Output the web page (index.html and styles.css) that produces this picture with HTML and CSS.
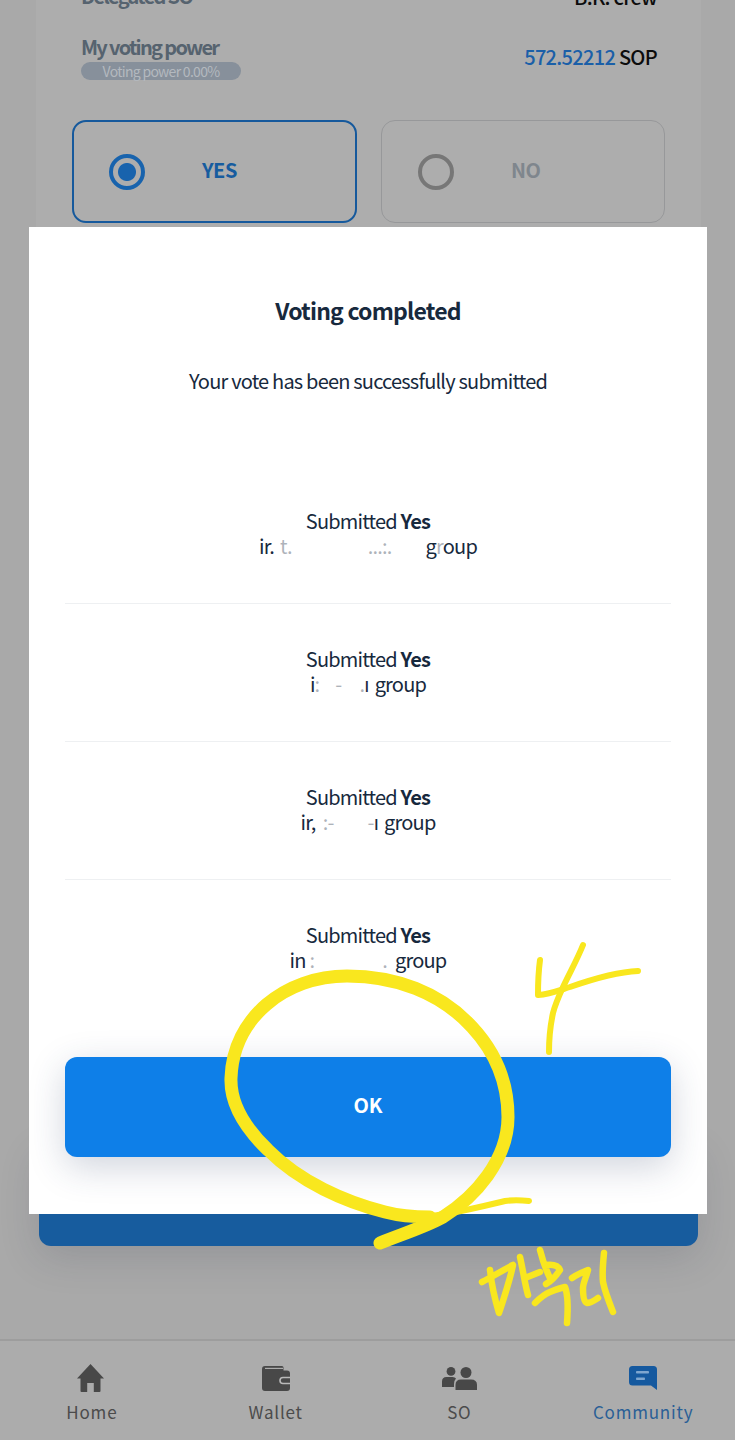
FILE: index.html
```html
<!DOCTYPE html>
<html lang="en">
<head>
<meta charset="utf-8">
<title>Voting completed</title>
<link rel="stylesheet" href="styles.css">
</head>
<body>
<div class="screen">
  <main class="page">
    <section class="card">
      <div class="row row-so">
        <span class="label">Delegated SO</span>
        <span class="value">B.K. crew</span>
      </div>
      <div class="row row-power">
        <div class="power">
          <span class="label">My voting power</span>
          <span class="pill">Voting power 0.00%</span>
        </div>
        <span class="value"><span class="amount">572.52212</span> SOP</span>
      </div>
      <div class="choices">
        <div class="choice choice-on">
          <span class="radio radio-on"></span>
          <span class="choice-text">YES</span>
        </div>
        <div class="choice">
          <span class="radio"></span>
          <span class="choice-text">NO</span>
        </div>
      </div>
      <div class="filler"></div>
    </section>
    <div class="submit"></div>
  </main>

  <nav class="tabs">
    <div class="tab">
      <div class="tab-icon">
        <svg class="i-home" viewBox="0 0 27 28"><path d="M13.500 0 L27 14.500 H23.500 V27 Q23.500 28 22.500 28 H16.800 V19 H10.200 V28 H4.500 Q3.500 28 3.500 27 V14.500 H0 Z" fill="#484848"/></svg>
      </div>
      <span>Home</span>
    </div>
    <div class="tab">
      <div class="tab-icon">
        <svg class="i-wallet" viewBox="0 0 28 25"><path d="M0 3 Q0 0 3 0 H20 Q21.500 0 21.500 1.500 V4.500 H25 Q28 4.500 28 7.500 V22 Q28 25 25 25 H3 Q0 25 0 22 Z" fill="#484848"/><path d="M3 2.400 H21" stroke="#adadad" stroke-width="1.200" fill="none"/><path d="M28 11.500 H21 Q18 11.500 18 14.500 Q18 17.500 21 17.500 H28" stroke="#b9b9b9" stroke-width="1.600" fill="none"/></svg>
      </div>
      <span>Wallet</span>
    </div>
    <div class="tab">
      <div class="tab-icon">
        <svg class="i-so" viewBox="0 0 35 23"><circle cx="9" cy="4.400" r="4.400" fill="#484848"/><circle cx="24" cy="5.500" r="5.500" fill="#484848"/><path d="M0 20 V14.500 Q0 10 4.500 10 H10.500 Q13 10 14 11.500 Q12 13.500 12 17 V20 Z" fill="#484848"/><path d="M13.500 23 V18 Q13.500 12.500 19 12.500 H29 Q35 12.500 35 18 V23 Z" fill="#484848"/></svg>
      </div>
      <span>SO</span>
    </div>
    <div class="tab tab-on">
      <div class="tab-icon">
        <svg class="i-chat" viewBox="0 0 28 24"><path d="M3.500 0 H24.500 Q28 0 28 3.500 V24 L22 19.500 H3.500 Q0 19.500 0 16 V3.500 Q0 0 3.500 0 Z" fill="#15599f"/><rect x="7" y="5" width="13" height="2.600" rx="0.800" fill="#7ea6cf"/><rect x="7" y="11.500" width="9" height="2.600" rx="0.800" fill="#7ea6cf"/></svg>
      </div>
      <span>Community</span>
    </div>
  </nav>

  <div class="modal">
    <h1 class="modal-title">Voting completed</h1>
    <p class="modal-text">Your vote has been successfully submitted</p>
    <ul class="results">
      <li class="result">
        <div>Submitted <b>Yes</b></div>
        <div class="group">ir.<span class="hide hide-a1"></span><span class="fade">t.</span><span class="hide hide-a2"></span><span class="fade">...:.</span><span class="hide hide-a3"></span>g<span class="fade">r</span>oup</div>
      </li>
      <li class="result">
        <div>Submitted <b>Yes</b></div>
        <div class="group">i<span class="fade">:</span><span class="hide hide-b1"></span><span class="fade">-</span><span class="hide hide-b2"></span><span class="fade">.</span>ı<span class="hide hide-b3"></span>group</div>
      </li>
      <li class="result">
        <div>Submitted <b>Yes</b></div>
        <div class="group">ir,<span class="hide hide-c1"></span><span class="fade">:-</span><span class="hide hide-c2"></span><span class="fade">-</span>ı<span class="hide hide-c3"></span>group</div>
      </li>
      <li class="result">
        <div>Submitted <b>Yes</b></div>
        <div class="group">in <span class="fade">:</span><span class="hide hide-d1"></span><span class="fade">.</span><span class="hide hide-d2"></span>group</div>
      </li>
    </ul>
    <button class="ok">OK</button>
  </div>

  <svg class="scribble" viewBox="0 0 735 1440" aria-hidden="true">
    <path class="thin" d="M420 1217 C445 1216 480 1207 505 1201 C512 1200 520 1200 529 1201"/>
    <path class="thick" d="M380 1243 C402 1234 425 1227 443 1217 C475 1197 508 1160 508 1117 C508 1085 498 1055 472 1027 C440 992 395 976 347 976 C285 976 233 1018 231 1078 C230 1105 245 1128 268 1150 C300 1182 345 1202 385 1212 C400 1216 415 1217 430 1217"/>
    <path class="thin" d="M540 960 C538 975 538 985 538 995 C550 994 560 990 570 987 C590 980 615 972 638 971"/>
    <path class="thin" d="M583 945 C577 960 570 972 563 987 C558 998 555 1005 553 1013 C550 1027 549 1040 549 1052"/>
    <path class="hand" d="M482 1282 C492 1277 503 1270 513 1265 C510 1280 505 1295 499 1313 C495 1300 492 1288 490 1270"/>
    <path class="hand" d="M520 1257 C523 1270 525 1285 528 1295 M525 1278 C530 1276 535 1274 540 1272"/>
    <path class="hand" d="M540 1250 C542 1258 544 1266 550 1278 M545 1265 C552 1264 558 1265 560 1270 C556 1276 550 1282 546 1284"/>
    <path class="hand" d="M535 1303 C540 1298 545 1294 550 1292 C555 1290 560 1288 565 1287 C568 1295 568 1310 567 1323"/>
    <path class="hand" d="M572 1278 C578 1274 583 1272 588 1270 C586 1278 583 1283 583 1288 C583 1297 584 1302 587 1303 C591 1303 595 1300 598 1298"/>
    <path class="hand" d="M604 1253 C603 1263 602 1273 603 1282 C605 1292 609 1302 613 1312"/>
  </svg>
</div>
</body>
</html>
```
FILE: styles.css
```css
* { box-sizing: border-box; }
html, body { margin: 0; padding: 0; }
body {
  font-family: "Noto Sans CJK KR", "Noto Sans", sans-serif;
  background: #a9a9a9;
}
.screen {
  position: relative;
  width: 735px;
  height: 1440px;
  overflow: hidden;
  display: flex;
  flex-direction: column;
  background: #a9a9a9;
}
.page {
  flex: 1;
  display: flex;
  flex-direction: column;
  min-height: 0;
}
.card {
  margin: -21px 34px 0 36px;
  background: #adadad;
  padding: 0 44px 0 45px;
  flex: 1;
  min-height: 0;
}
.row {
  display: flex;
  justify-content: space-between;
  align-items: center;
}
.row-so { height: 34px; }
.row-power { margin-top: 12px; height: 62px; }
.power { display: flex; flex-direction: column; align-items: flex-start; }
.label {
  font-size: 20px;
  font-weight: 700;
  letter-spacing: -1.700px;
  color: #56636f;
  line-height: 28px;
}
.value {
  font-size: 20px;
  font-weight: 500;
  letter-spacing: -0.700px;
  color: #0c0c0c;
}
.amount { color: #1a5fa8; }
.pill {
  width: 160px;
  height: 18px;
  margin-top: 1px;
  background: #87909b;
  border-radius: 9px;
  text-align: center;
  font-size: 14px;
  line-height: 18px;
  letter-spacing: -0.700px;
  color: #b4b9bf;
}
.choices {
  display: flex;
  gap: 24px;
  margin: 33px -8px 0 -9px;
}
.choice {
  flex: 1;
  height: 103px;
  border: 1px solid #97989a;
  border-radius: 14px;
  display: flex;
  align-items: center;
  padding-left: 36px;
  color: #7f868d;
}
.choice-on {
  border: 2px solid #16599c;
  padding-left: 35px;
  color: #175c9f;
}
.choice-text {
  font-size: 20px;
  font-weight: 700;
  letter-spacing: -0.500px;
  margin-left: 57px;
  position: relative;
  top: -2px;
}
.radio {
  width: 36px;
  height: 36px;
  border: 4px solid #777;
  border-radius: 50%;
  flex: none;
}
.radio-on {
  border-color: #1863ad;
  background: radial-gradient(circle, #1863ad 0 8.500px, transparent 9.500px);
}
.submit {
  margin: -68px 37px 93px 39px;
  height: 100px;
  flex: none;
  background: #175c9e;
  border-radius: 0 0 12px 12px;
  box-shadow: 0 10px 40px rgba(30, 40, 60, 0.16);
  position: relative;
}
.tabs {
  flex: none;
  height: 101px;
  border-top: 2px solid #9d9d9d;
  background: #acacac;
  display: grid;
  grid-template-columns: repeat(4, 1fr);
}
.tab {
  display: flex;
  flex-direction: column;
  align-items: center;
  padding-top: 23px;
  font-size: 17px;
  letter-spacing: 0.800px;
  line-height: 24px;
  color: #4b4b4b;
}
.tab-on { color: #2a5f96; }
.tab-icon {
  height: 28px;
  margin-bottom: 8px;
  display: flex;
  align-items: center;
}
.i-home { width: 27px; height: 28px; margin-right: 3px; }
.i-wallet { width: 28px; height: 25px; }
.i-so { width: 35px; height: 23px; }
.i-chat { width: 28px; height: 24px; }
.modal {
  position: absolute;
  left: 29px;
  top: 227px;
  width: 678px;
  height: 987px;
  background: #fff;
  padding: 0 36px;
  display: flex;
  flex-direction: column;
  color: #17293d;
}
.modal-title {
  margin: 65px 0 0;
  font-size: 23px;
  font-weight: 700;
  letter-spacing: -0.800px;
  line-height: 36px;
  text-align: center;
}
.modal-text {
  margin: 38px 0 0;
  font-size: 20px;
  font-weight: 400;
  letter-spacing: -0.800px;
  line-height: 30px;
  text-align: center;
}
.results {
  list-style: none;
  margin: 94px 0 0;
  padding: 0;
}
.result {
  height: 138px;
  padding-top: 41.500px;
  border-bottom: 1px solid #eef0f2;
  text-align: center;
  font-size: 20px;
  letter-spacing: -0.800px;
  line-height: 25.500px;
}
.result:first-child { height: 114px; padding-top: 17.500px; }
.result:last-child { border-bottom: 0; }
.result b { font-weight: 700; }
.fade { opacity: 0.35; }
.hide { display: inline-block; height: 1px; }
.hide-a1 { width: 6px; }
.hide-a2 { width: 76px; }
.hide-a3 { width: 34px; }
.hide-b1 { width: 16px; }
.hide-b2 { width: 18px; }
.hide-b3 { width: 6px; }
.hide-c1 { width: 7px; }
.hide-c2 { width: 34px; }
.hide-c3 { width: 6px; }
.hide-d1 { width: 68px; }
.hide-d2 { width: 8px; }
.ok {
  position: absolute;
  left: 36px;
  top: 830px;
  width: 606px;
  height: 100px;
  border: 0;
  border-radius: 12px;
  padding: 0 0 6px;
  background: #0e7fe8;
  box-shadow: 0 10px 36px rgba(40, 60, 100, 0.22);
  color: #fff;
  font-family: "Noto Sans CJK KR", "Noto Sans", sans-serif;
  font-size: 20px;
  font-weight: 700;
}
.scribble {
  position: absolute;
  left: 0;
  top: 0;
  width: 735px;
  height: 1440px;
  fill: none;
  stroke: #f9e71e;
  stroke-linecap: round;
  stroke-linejoin: round;
  pointer-events: none;
}
.thick { stroke-width: 13px; }
.thin { stroke-width: 6px; }
.hand { stroke-width: 6.500px; }
```
